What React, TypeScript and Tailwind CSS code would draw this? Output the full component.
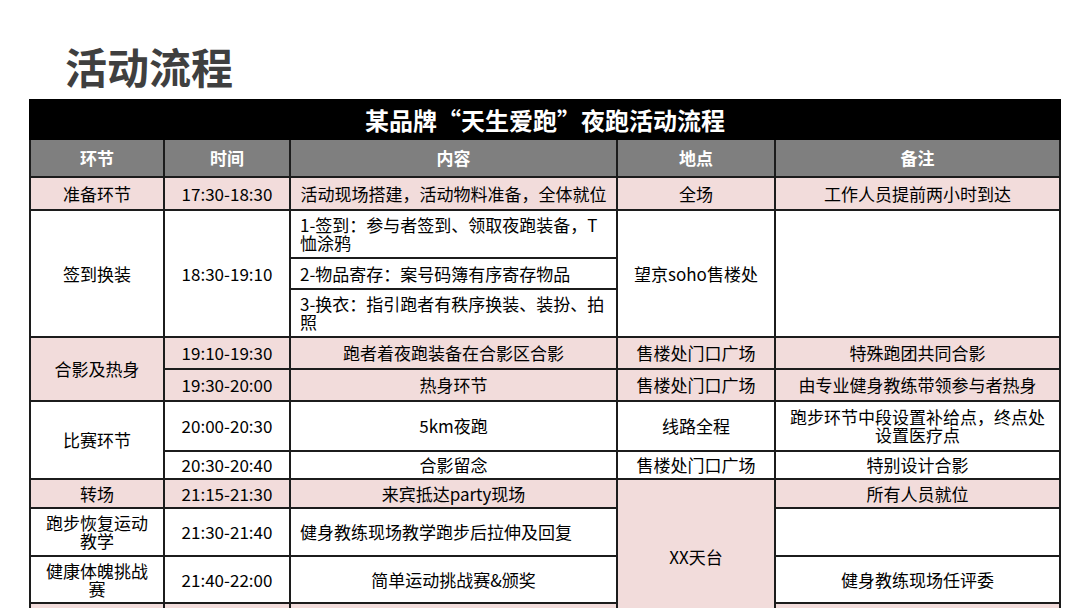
import React from "react";

const FONT = { fontFamily: '"Noto Sans CJK SC", "Noto Sans", sans-serif' };

const cell = "border-2 border-[#1c1c1c] text-center align-middle px-2 leading-[18px]";
const pink = "bg-[#f2dcdb]";
const left = "border-2 border-[#1c1c1c] text-left align-middle pl-[9px] pr-2 leading-[18px]";

export default function App() {
  return (
    <div className="w-[1080px] h-[608px] overflow-hidden bg-white text-black" style={FONT}>
      {/* Page title */}
      <h1 className="pl-[65px] pt-[38px] h-[99px] text-[42px] leading-[56px] font-bold text-[#3f3f3f]">
        活动流程
      </h1>

      <table className="ml-[29px] w-[1030px] table-fixed border-collapse text-[17px]">
        <colgroup>
          <col className="w-[134px]" />
          <col className="w-[126px]" />
          <col className="w-[327px]" />
          <col className="w-[158px]" />
          <col className="w-[285px]" />
        </colgroup>
        <thead>
          <tr className="h-[39px]">
            <th colSpan={5} className="bg-black text-white text-[24px] font-bold border-2 border-black">
              某品牌“天生爱跑”夜跑活动流程
            </th>
          </tr>
          <tr className="h-[38px] bg-[#7f7f7f] text-white">
            <th className={cell + " font-bold"}>环节</th>
            <th className={cell + " font-bold"}>时间</th>
            <th className={cell + " font-bold"}>内容</th>
            <th className={cell + " font-bold"}>地点</th>
            <th className={cell + " font-bold"}>备注</th>
          </tr>
        </thead>
        <tbody>
          {/* 准备环节 */}
          <tr className={"h-[33px] " + pink}>
            <td className={cell}>准备环节</td>
            <td className={cell}>17:30-18:30</td>
            <td className={cell}>活动现场搭建，活动物料准备，全体就位</td>
            <td className={cell}>全场</td>
            <td className={cell}>工作人员提前两小时到达</td>
          </tr>

          {/* 签到换装 */}
          <tr className="h-[48px]">
            <td rowSpan={3} className={cell}>签到换装</td>
            <td rowSpan={3} className={cell}>18:30-19:10</td>
            <td className={left}>
              1-签到：参与者签到、领取夜跑装备，T<br />恤涂鸦
            </td>
            <td rowSpan={3} className={cell}>望京soho售楼处</td>
            <td rowSpan={3} className={cell}></td>
          </tr>
          <tr className="h-[31px]">
            <td className={left}>2-物品寄存：案号码簿有序寄存物品</td>
          </tr>
          <tr className="h-[48px]">
            <td className={left}>
              3-换衣：指引跑者有秩序换装、装扮、拍<br />照
            </td>
          </tr>

          {/* 合影及热身 */}
          <tr className={"h-[32px] " + pink}>
            <td rowSpan={2} className={cell}>合影及热身</td>
            <td className={cell}>19:10-19:30</td>
            <td className={cell}>跑者着夜跑装备在合影区合影</td>
            <td className={cell}>售楼处门口广场</td>
            <td className={cell}>特殊跑团共同合影</td>
          </tr>
          <tr className={"h-[32px] " + pink}>
            <td className={cell}>19:30-20:00</td>
            <td className={cell}>热身环节</td>
            <td className={cell}>售楼处门口广场</td>
            <td className={cell}>由专业健身教练带领参与者热身</td>
          </tr>

          {/* 比赛环节 */}
          <tr className="h-[50px]">
            <td rowSpan={2} className={cell}>比赛环节</td>
            <td className={cell}>20:00-20:30</td>
            <td className={cell}>5km夜跑</td>
            <td className={cell}>线路全程</td>
            <td className={cell}>
              跑步环节中段设置补给点，终点处<br />设置医疗点
            </td>
          </tr>
          <tr className="h-[28px]">
            <td className={cell}>20:30-20:40</td>
            <td className={cell}>合影留念</td>
            <td className={cell}>售楼处门口广场</td>
            <td className={cell}>特别设计合影</td>
          </tr>

          {/* 转场 */}
          <tr className={"h-[29px] " + pink}>
            <td className={cell}>转场</td>
            <td className={cell}>21:15-21:30</td>
            <td className={cell}>来宾抵达party现场</td>
            <td rowSpan={4} className={cell}>XX天台</td>
            <td className={cell}>所有人员就位</td>
          </tr>
          <tr className="h-[48px]">
            <td className={cell}>
              跑步恢复运动<br />教学
            </td>
            <td className={cell}>21:30-21:40</td>
            <td className={left}>健身教练现场教学跑步后拉伸及回复</td>
            <td className={cell}></td>
          </tr>
          <tr className="h-[47px]">
            <td className={cell}>
              健康体魄挑战<br />赛
            </td>
            <td className={cell}>21:40-22:00</td>
            <td className={cell}>简单运动挑战赛&amp;颁奖</td>
            <td className={cell}>健身教练现场任评委</td>
          </tr>
          <tr className={"h-[32px] " + pink}>
            <td className={cell}></td>
            <td className={cell}></td>
            <td className={cell}></td>
            <td className={cell}></td>
          </tr>
        </tbody>
      </table>
    </div>
  );
}
